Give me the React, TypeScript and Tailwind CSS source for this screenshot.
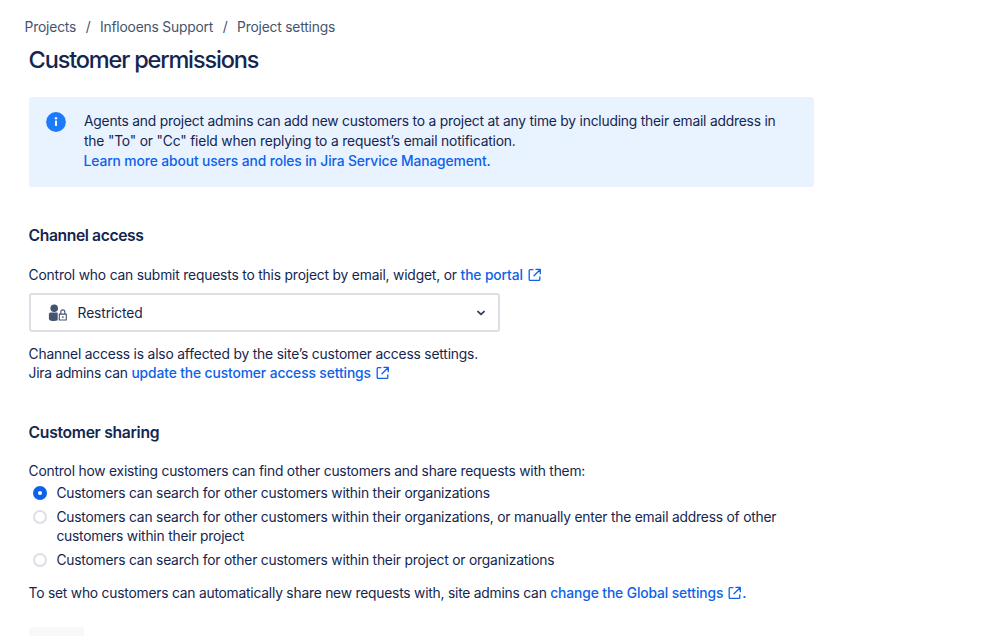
import React from 'react';

const ExternalIcon: React.FC = () => (
  <svg viewBox="0 0 14 14" className="ml-[5px] inline-block size-[14px] align-[-2px]" fill="none" stroke="currentColor" strokeWidth="1.3" strokeLinecap="round" strokeLinejoin="round">
    <path d="M4.9 1.7H2.1Q1.2 1.7 1.2 2.6V11.4Q1.2 12.3 2.1 12.3H10.9Q11.8 12.3 11.8 11.4V8.8" />
    <path d="M8 1.4H12.3V5.7M12 1.7L6 7.7" />
  </svg>
);

const InfoIcon: React.FC = () => (
  <svg viewBox="0 0 20 20" className="size-[20px] shrink-0">
    <circle cx="10" cy="10" r="9.9" fill="#1d7afc" />
    <circle cx="10" cy="6.3" r="1.2" fill="#fff" />
    <rect x="9" y="8.6" width="2" height="5.4" rx="0.6" fill="#fff" />
  </svg>
);

const RestrictedIcon: React.FC = () => (
  <svg viewBox="0 0 20 18" className="h-[18px] w-[20px] shrink-0" fill="#44546f">
    <circle cx="6.2" cy="4.2" r="3.8" />
    <path d="M2.6 8.6H8.6C9.3 8.6 9.7 9 9.7 9.6V16.2C8.8 16.8 7.6 17 6.2 17C2.9 17 0.9 16.2 0.9 14.7V10.6C0.9 9.3 1.5 8.6 2.6 8.6Z" />
    <path d="M11.3 10.1H18.3V16H11.3ZM12.8 10V7.9Q12.8 5.9 14.8 5.9Q16.8 5.9 16.8 7.9V10" fill="none" stroke="#44546f" strokeWidth="1.1" strokeLinejoin="round" />
    <circle cx="14.8" cy="13.1" r="0.9" />
  </svg>
);

interface LinkProps {
  children: React.ReactNode;
}

const TextLink: React.FC<LinkProps> = ({ children }) => (
  <a href="#" className="font-medium tracking-[-0.1px] text-[#0c62e8]">
    {children}
  </a>
);

interface OptionProps {
  checked?: boolean;
  children: React.ReactNode;
}

const RadioOption: React.FC<OptionProps> = ({ checked, children }) => (
  <label className="flex gap-[9px] pl-[4.8px]">
    <span
      className={`mt-[2px] flex size-[14px] shrink-0 items-center justify-center rounded-full ${
        checked ? 'bg-[#0c62e8]' : 'border-2 border-[#dddee6] bg-white'
      }`}
    >
      {checked && <span className="size-[4px] rounded-full bg-white" />}
    </span>
    <span>{children}</span>
  </label>
);

const App: React.FC = () => {
  return (
    <div className="h-[636px] w-[999px] overflow-hidden bg-white font-['Inter',sans-serif] text-[13.8px] leading-[19.6px] tracking-[-0.2px] whitespace-nowrap text-[#14264f]">
      <nav className="flex pt-[18px] pl-[24.6px] tracking-[-0.18px] text-[#44546f]">
        <span>Projects</span>
        <span className="px-[9.5px]">/</span>
        <span>Inflooens Support</span>
        <span className="px-[9.5px]">/</span>
        <span>Project settings</span>
      </nav>

      <main className="pl-[28.6px]">
        <h1 className="mt-[8.4px] text-[23.5px] leading-[28px] font-medium tracking-[-1.16px]">Customer permissions</h1>

        <section className="mt-[22.6px] flex h-[90px] w-[785.4px] gap-[18px] rounded-[3px] bg-[#e9f2ff] pt-[15px] pl-[17.4px]">
          <InfoIcon />
          <div className="pt-[0.8px]">
            <p>Agents and project admins can add new customers to a project at any time by including their email address in</p>
            <p className="tracking-[-0.17px]">the "To" or "Cc" field when replying to a request’s email notification.</p>
            <p className="-ml-[0.4px]">
              <TextLink>Learn more about users and roles in Jira Service Management.</TextLink>
            </p>
          </div>
        </section>

        <section className="mt-[39.6px]">
          <h2 className="text-[15.7px] leading-[20px] font-semibold tracking-[-0.4px]">Channel access</h2>
          <p className="mt-[19.6px] tracking-[-0.17px]">
            Control who can submit requests to this project by email, widget, or{' '}
            <TextLink>
              the portal
              <ExternalIcon />
            </TextLink>
          </p>
          <button className="mt-[8px] flex h-[39px] w-[471px] items-center rounded-[3px] border-2 border-[#dddee6] pr-[12px] pl-[17px] text-left">
            <RestrictedIcon />
            <span className="ml-[10px] flex-1 pt-[2px] tracking-[-0.1px]">Restricted</span>
            <svg viewBox="0 0 10 10" className="size-[10px]" fill="none" stroke="#34456a" strokeWidth="1.9" strokeLinecap="round" strokeLinejoin="round">
              <path d="M2 3.6L5 6.4L8 3.6" />
            </svg>
          </button>
          <p className="mt-[12.2px] tracking-[-0.17px]">Channel access is also affected by the site’s customer access settings.</p>
          <p className="tracking-[-0.25px]">
            Jira admins can{' '}
            <TextLink>
              update the customer access settings
              <ExternalIcon />
            </TextLink>
          </p>
        </section>

        <section className="mt-[39.2px]">
          <h2 className="text-[15.7px] leading-[20px] font-semibold tracking-[-0.3px]">Customer sharing</h2>
          <p className="mt-[19.4px]">Control how existing customers can find other customers and share requests with them:</p>
          <div className="mt-[2px] flex flex-col gap-[4px]">
            <RadioOption checked>Customers can search for other customers within their organizations</RadioOption>
            <RadioOption>
              Customers can search for other customers within their organizations, or manually enter the email address of other
              <br />
              customers within their project
            </RadioOption>
            <RadioOption>Customers can search for other customers within their project or organizations</RadioOption>
          </div>
          <p className="mt-[13.4px] tracking-[-0.21px]">
            To set who customers can automatically share new requests with, site admins can{' '}
            <TextLink>
              change the Global settings
              <ExternalIcon />.
            </TextLink>
          </p>
        </section>

        <div className="mt-[24px] h-[31px] w-[55px] rounded-[3px] bg-[#f7f8f9]" />
      </main>
    </div>
  );
};

export default App;
